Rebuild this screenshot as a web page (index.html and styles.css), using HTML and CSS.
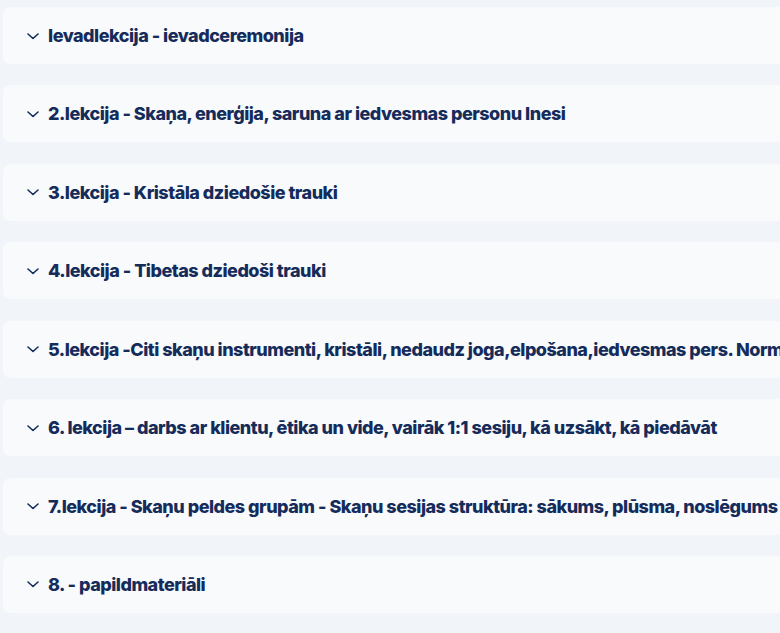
FILE: index.html
```html
<!DOCTYPE html>
<html lang="lv">
<head>
<meta charset="utf-8">
<link rel="stylesheet" href="styles.css">
</head>
<body>
<div class="list">
  <div class="item"><svg class="chev" viewBox="0 0 12 8"><path d="M1 2 L6 6.5 L11 2"/></svg><span class="title">Ievadlekcija - ievadceremonija</span></div>
  <div class="item"><svg class="chev" viewBox="0 0 12 8"><path d="M1 2 L6 6.5 L11 2"/></svg><span class="title">2.lekcija - Skaņa, enerģija, saruna ar iedvesmas personu Inesi</span></div>
  <div class="item"><svg class="chev" viewBox="0 0 12 8"><path d="M1 2 L6 6.5 L11 2"/></svg><span class="title">3.lekcija - Kristāla dziedošie trauki</span></div>
  <div class="item"><svg class="chev" viewBox="0 0 12 8"><path d="M1 2 L6 6.5 L11 2"/></svg><span class="title">4.lekcija - Tibetas dziedoši trauki</span></div>
  <div class="item"><svg class="chev" viewBox="0 0 12 8"><path d="M1 2 L6 6.5 L11 2"/></svg><span class="title">5.lekcija -Citi skaņu instrumenti, kristāli, nedaudz joga,elpošana,iedvesmas pers. Normunds</span></div>
  <div class="item"><svg class="chev" viewBox="0 0 12 8"><path d="M1 2 L6 6.5 L11 2"/></svg><span class="title">6. lekcija – darbs ar klientu, ētika un vide, vairāk 1:1 sesiju, kā uzsākt, kā piedāvāt</span></div>
  <div class="item"><svg class="chev" viewBox="0 0 12 8"><path d="M1 2 L6 6.5 L11 2"/></svg><span class="title">7.lekcija - Skaņu peldes grupām - Skaņu sesijas struktūra: sākums, plūsma, noslēgums</span></div>
  <div class="item"><svg class="chev" viewBox="0 0 12 8"><path d="M1 2 L6 6.5 L11 2"/></svg><span class="title">8. - papildmateriāli</span></div>
</div>
</body>
</html>
```
FILE: styles.css
```css
html, body {
  margin: 0;
  padding: 0;
  background: #f1f4f8;
  overflow: hidden;
}
body {
  font-family: Inter, "Noto Sans", sans-serif;
  width: 780px;
  height: 633px;
}
.list {
  display: flex;
  flex-direction: column;
  gap: 21.43px;
  padding: 7px 0 0 3px;
  width: 900px;
}
.item {
  display: flex;
  align-items: center;
  height: 57px;
  padding-left: 24px;
  background: #f8fafc;
  border-radius: 7px;
  white-space: nowrap;
}
.chev {
  width: 12px;
  height: 8px;
  flex: none;
  margin-right: 9px;
  fill: none;
  stroke: #152c5b;
  stroke-width: 1.6;
  stroke-linecap: round;
  stroke-linejoin: round;
}
.title {
  font-size: 18px;
  font-weight: 800;
  color: #152c5b;
  letter-spacing: -0.5px;
}
```
